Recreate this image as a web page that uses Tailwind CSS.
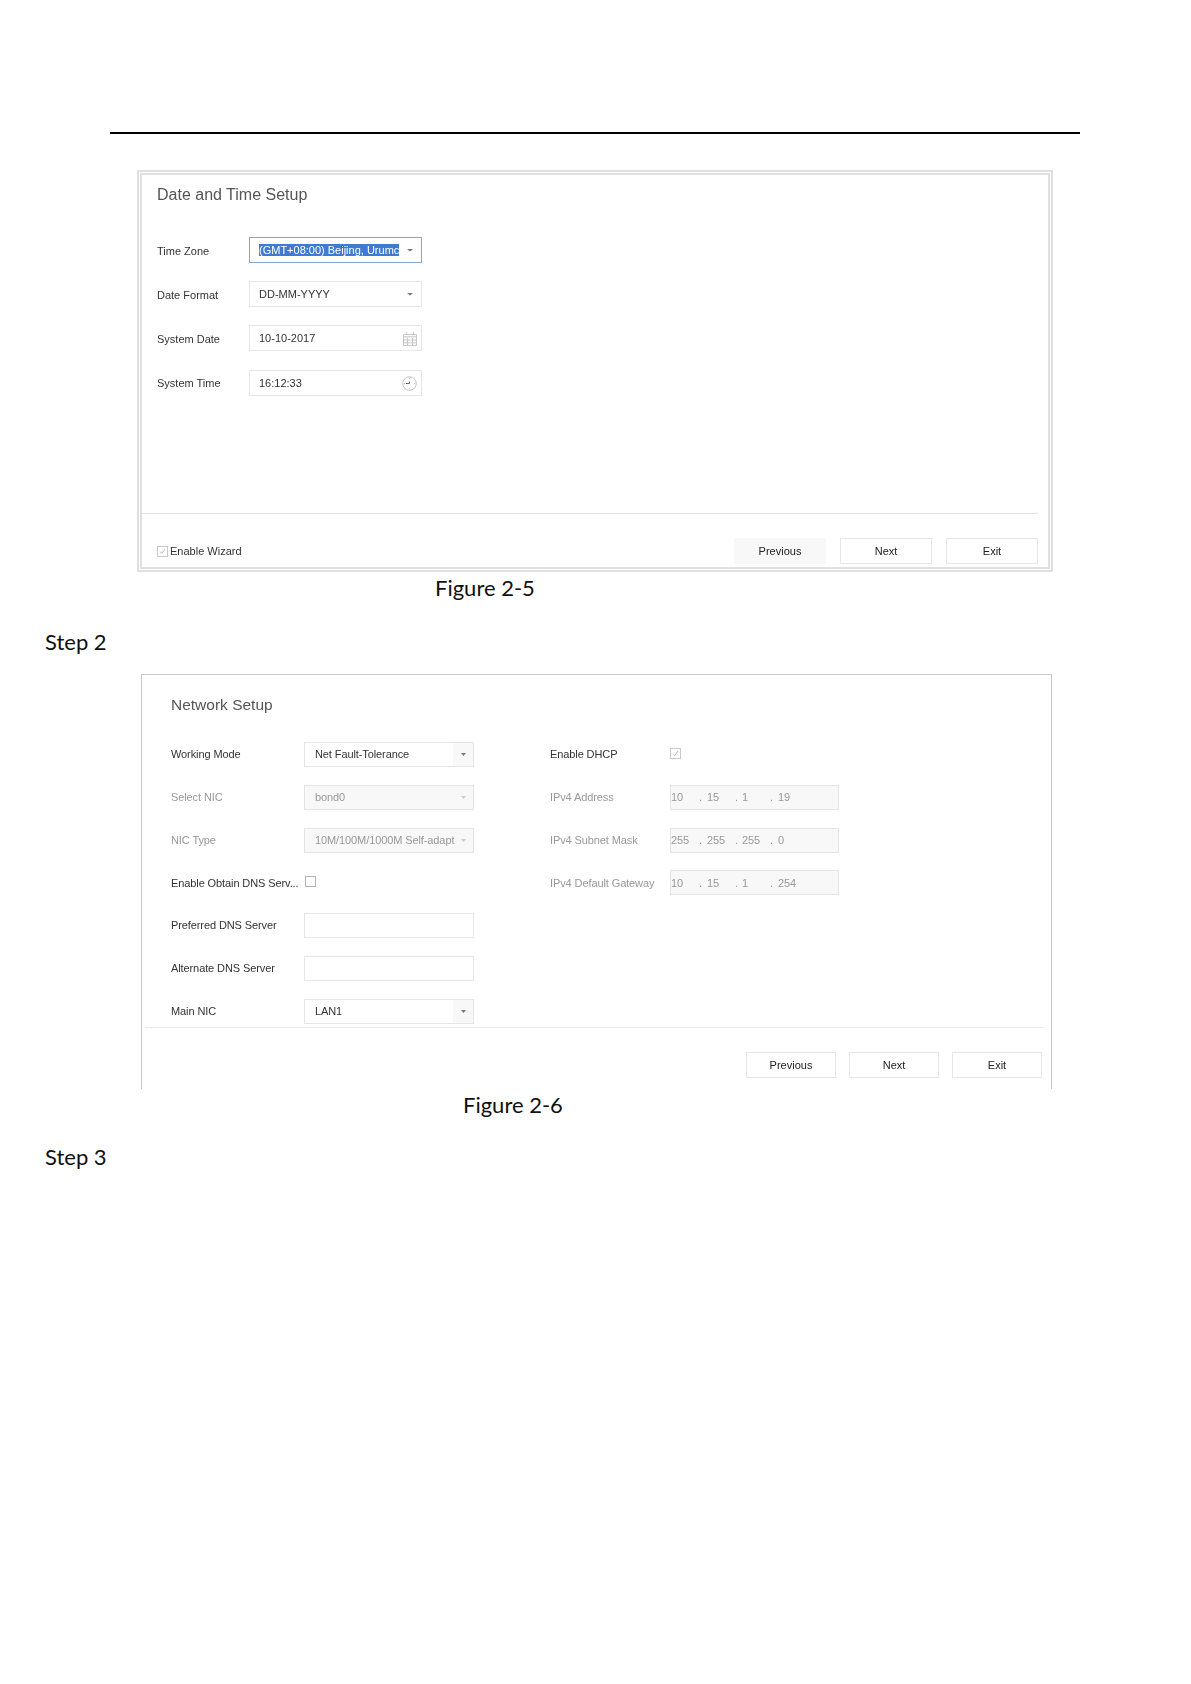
<!doctype html>
<html>
<head>
<meta charset="utf-8">
<script src="https://cdn.jsdelivr.net/npm/@tailwindcss/browser@4"></script>
</head>
<body class="bg-white">
<div class="w-[1191px] h-[1684px] bg-white overflow-hidden font-['Liberation_Sans',Arial,sans-serif] text-[11px] text-[#333]">
  <div class="ml-[110px] mt-[132px] w-[970px] h-[2px] bg-black"></div>

  <!-- Figure 2-5 -->
  <section class="ml-[137px] mt-[36px] w-[916px] h-[402px] border-[5px] border-double border-[#e0e0e0] flex flex-col blur-[0.3px]">
    <h2 class="ml-[15px] mt-[10px] h-[20px] leading-[20px] text-[16px] text-[#555]">Date and Time Setup</h2>
    <div class="ml-[15px] mt-[32px] flex flex-col gap-[18px]">
      <div class="flex items-center h-[26px]">
        <span class="w-[92px] pt-[2px]">Time Zone</span>
        <div class="w-[173px] h-[26px] border border-[#86a9d2] flex items-center pl-[9px] pr-[8px]">
          <span class="w-[140px] h-[12px] leading-[12px] overflow-hidden whitespace-nowrap bg-[#3f7ad3] text-white">(GMT+08:00) Beijing, Urumc</span>
          <svg class="ml-auto" width="6" height="4" viewBox="0 0 6 4"><path d="M0 1h6L3 3.5z" fill="#777"/></svg>
        </div>
      </div>
      <div class="flex items-center h-[26px]">
        <span class="w-[92px] pt-[2px]">Date Format</span>
        <div class="w-[173px] h-[26px] border border-[#e6e6e6] flex items-center pl-[9px] pr-[8px]">
          <span>DD-MM-YYYY</span>
          <svg class="ml-auto" width="6" height="4" viewBox="0 0 6 4"><path d="M0 1h6L3 3.5z" fill="#777"/></svg>
        </div>
      </div>
      <div class="flex items-center h-[26px]">
        <span class="w-[92px] pt-[2px]">System Date</span>
        <div class="w-[173px] h-[26px] border border-[#e6e6e6] flex items-center pl-[9px] pr-[4px]">
          <span>10-10-2017</span>
          <svg class="ml-auto mt-[1px]" width="14" height="14" viewBox="0 0 14 14" fill="none" stroke="#c6c6c6" stroke-width="1"><path d="M.5 2.5h13v11H.5zM.5 8h13M.5 10.8h13M4.5 5.5v8M9.5 5.5v8M3.5 .5v2M10.5 .5v2"/><path d="M1 4h12v1.500H1z" fill="#d8d8d8" stroke="none"/></svg>
        </div>
      </div>
      <div class="flex items-center h-[26px] mt-[1px]">
        <span class="w-[92px]">System Time</span>
        <div class="w-[173px] h-[26px] border border-[#e6e6e6] flex items-center pl-[9px] pr-[4px]">
          <span>16:12:33</span>
          <svg class="ml-auto" width="15" height="15" viewBox="0 0 15 15" fill="none" stroke="#c4c4c4" stroke-width="1"><circle cx="7.500" cy="7.500" r="6.800"/><path d="M7.500 1.500v1.500M7.500 12v1.500M1.500 7.500h1.500M12 7.500h1.500"/><path d="M7.500 5.500v2H4" stroke="#666"/></svg>
        </div>
      </div>
    </div>
    <div class="mt-auto w-[896px] h-[1px] bg-[#e4e4e4]"></div>
    <div class="flex items-center justify-between pl-[15px] pr-[10px] pt-[24px] pb-[3px]">
      <label class="flex items-center gap-[2px]">
        <span class="w-[11px] h-[11px] border border-[#c9c9c9] flex items-center justify-center">
          <svg width="7" height="7" viewBox="0 0 7 7" fill="none" stroke="#9ab" stroke-width=".8"><path d="M1 3.500l1.800 2L6 1"/></svg>
        </span>
        <span>Enable Wizard</span>
      </label>
      <div class="flex gap-[14px]">
        <button class="w-[92px] h-[26px] pt-[1px] bg-[#f8f8f8] text-[#222]">Previous</button>
        <button class="w-[92px] h-[26px] pt-[1px] border border-[#e6e6e6] text-[#222]">Next</button>
        <button class="w-[92px] h-[26px] pt-[1px] border border-[#e6e6e6] text-[#222]">Exit</button>
      </div>
    </div>
  </section>
  <p class="ml-[435px] mt-[2px] h-[28px] leading-[28px] text-[22px] text-[#111] font-['Lato',sans-serif]">Figure 2-5</p>
  <p class="ml-[45px] mt-[26px] h-[28px] leading-[28px] text-[22px] text-[#111] font-['Lato',sans-serif]">Step 2</p>

  <!-- Figure 2-6 -->
  <section class="ml-[141px] mt-[18px] w-[911px] h-[415px] border-x border-t border-[#c8c8c8] flex flex-col blur-[0.3px]">
    <h2 class="ml-[29px] mt-[20px] h-[20px] leading-[20px] text-[15.500px] text-[#555]">Network Setup</h2>
    <div class="ml-[29px] mt-[27px] flex gap-[76px] tracking-[-0.1px]">
      <div class="w-[303px] flex flex-col gap-[17.800px]">
        <div class="flex items-center h-[25px]">
          <span class="w-[133px]">Working Mode</span>
          <div class="w-[170px] h-[25px] border border-[#e6e6e6] flex items-center pl-[10px]">
            <span>Net Fault-Tolerance</span>
            <span class="ml-auto w-[20px] h-full bg-[#f8f8f8] flex items-center justify-center"><svg width="5" height="3" viewBox="0 0 5 3"><path d="M0 0h5L2.500 3z" fill="#777"/></svg></span>
          </div>
        </div>
        <div class="flex items-center h-[25px] text-[#999]">
          <span class="w-[133px]">Select NIC</span>
          <div class="w-[170px] h-[25px] border border-[#e4e4e4] bg-[#f8f8f8] flex items-center pl-[10px]">
            <span>bond0</span>
            <span class="ml-auto w-[20px] h-full flex items-center justify-center"><svg width="5" height="3" viewBox="0 0 5 3"><path d="M0 0h5L2.500 3z" fill="#ccc"/></svg></span>
          </div>
        </div>
        <div class="flex items-center h-[25px] text-[#999]">
          <span class="w-[133px]">NIC Type</span>
          <div class="w-[170px] h-[25px] border border-[#e4e4e4] bg-[#f8f8f8] flex items-center pl-[10px]">
            <span class="whitespace-nowrap">10M/100M/1000M Self-adapt</span>
            <span class="ml-auto w-[20px] h-full flex items-center justify-center"><svg width="5" height="3" viewBox="0 0 5 3"><path d="M0 0h5L2.500 3z" fill="#ccc"/></svg></span>
          </div>
        </div>
        <div class="flex items-center h-[25px]">
          <span class="w-[134px] whitespace-nowrap">Enable Obtain DNS Serv...</span>
          <span class="w-[11px] h-[11px] border border-[#b5b5b5] mb-[2px]"></span>
        </div>
        <div class="flex items-center h-[25px]">
          <span class="w-[133px]">Preferred DNS Server</span>
          <div class="w-[170px] h-[25px] border border-[#e6e6e6]"></div>
        </div>
        <div class="flex items-center h-[25px]">
          <span class="w-[133px]">Alternate DNS Server</span>
          <div class="w-[170px] h-[25px] border border-[#e6e6e6]"></div>
        </div>
        <div class="flex items-center h-[25px]">
          <span class="w-[133px]">Main NIC</span>
          <div class="w-[170px] h-[25px] border border-[#e6e6e6] flex items-center pl-[10px]">
            <span>LAN1</span>
            <span class="ml-auto w-[20px] h-full bg-[#f8f8f8] flex items-center justify-center"><svg width="5" height="3" viewBox="0 0 5 3"><path d="M0 0h5L2.500 3z" fill="#777"/></svg></span>
          </div>
        </div>
      </div>
      <div class="w-[289px] flex flex-col gap-[17.800px]">
        <div class="flex items-center h-[25px]">
          <span class="w-[120px]">Enable DHCP</span>
          <span class="w-[11px] h-[11px] border border-[#c9c9c9] flex items-center justify-center mb-[2px]">
            <svg width="7" height="7" viewBox="0 0 7 7" fill="none" stroke="#9ab" stroke-width=".8"><path d="M1 3.500l1.800 2L6 1"/></svg>
          </span>
        </div>
        <div class="flex items-center h-[25px] text-[#999]">
          <span class="w-[120px] whitespace-nowrap">IPv4 Address</span>
          <div class="w-[169px] h-[25px] border border-[#e4e4e4] bg-[#f8f8f8] flex items-center">
            <span class="w-[28px]">10</span><span class="w-[8px]">.</span><span class="w-[28px]">15</span><span class="w-[7px]">.</span><span class="w-[28px]">1</span><span class="w-[8px]">.</span><span>19</span>
          </div>
        </div>
        <div class="flex items-center h-[25px] text-[#999]">
          <span class="w-[120px] whitespace-nowrap">IPv4 Subnet Mask</span>
          <div class="w-[169px] h-[25px] border border-[#e4e4e4] bg-[#f8f8f8] flex items-center">
            <span class="w-[28px]">255</span><span class="w-[8px]">.</span><span class="w-[28px]">255</span><span class="w-[7px]">.</span><span class="w-[28px]">255</span><span class="w-[8px]">.</span><span>0</span>
          </div>
        </div>
        <div class="flex items-center h-[25px] text-[#999]">
          <span class="w-[120px] whitespace-nowrap">IPv4 Default Gateway</span>
          <div class="w-[169px] h-[25px] border border-[#e4e4e4] bg-[#f8f8f8] flex items-center">
            <span class="w-[28px]">10</span><span class="w-[8px]">.</span><span class="w-[28px]">15</span><span class="w-[7px]">.</span><span class="w-[28px]">1</span><span class="w-[8px]">.</span><span>254</span>
          </div>
        </div>
      </div>
    </div>
    <div class="ml-[3px] mt-[3px] w-[898px] h-[1px] bg-[#e8e8e8]"></div>
    <div class="flex justify-end gap-[13px] pr-[9px] pt-[24px]">
      <button class="w-[90px] h-[26px] pt-[1px] border border-[#e6e6e6] text-[#222]">Previous</button>
      <button class="w-[90px] h-[26px] pt-[1px] border border-[#e6e6e6] text-[#222]">Next</button>
      <button class="w-[90px] h-[26px] pt-[1px] border border-[#e6e6e6] text-[#222]">Exit</button>
    </div>
  </section>
  <p class="ml-[463px] mt-[2px] h-[28px] leading-[28px] text-[22px] text-[#111] font-['Lato',sans-serif]">Figure 2-6</p>
  <p class="ml-[45px] mt-[24px] h-[28px] leading-[28px] text-[22px] text-[#111] font-['Lato',sans-serif]">Step 3</p>
</div>
</body>
</html>
